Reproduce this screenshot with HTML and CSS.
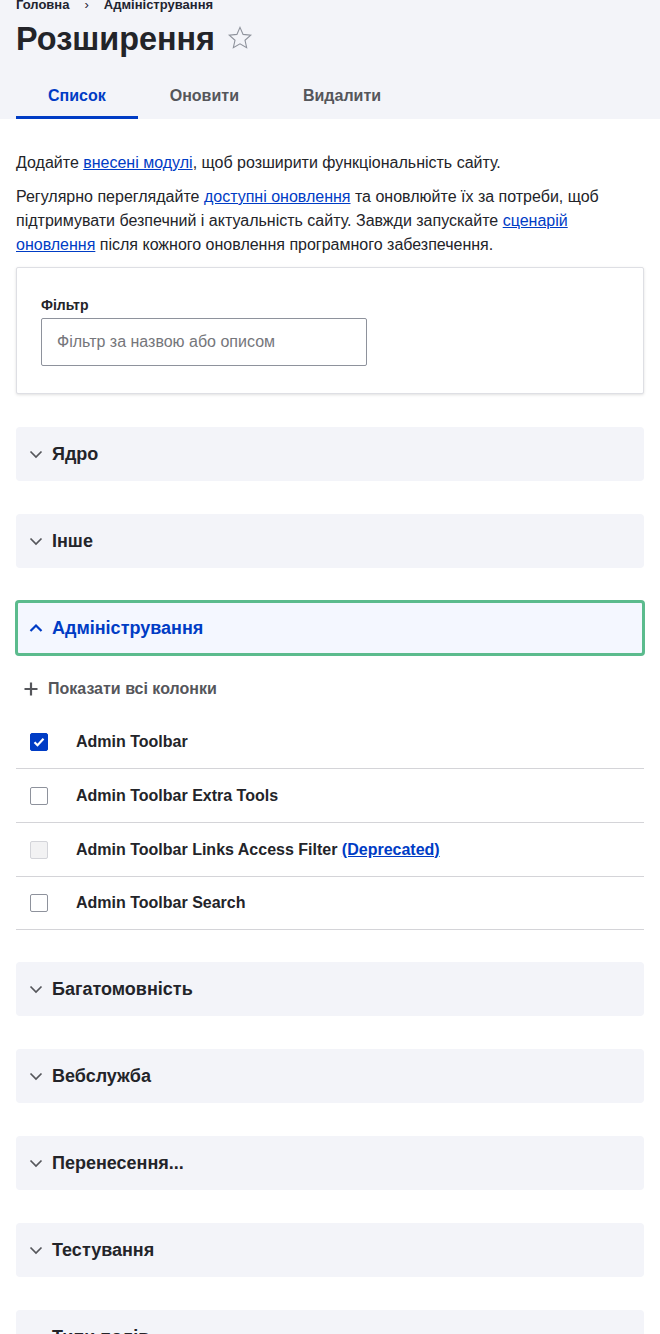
FILE: index.html
```html
<!DOCTYPE html>
<html lang="uk">
<head>
<meta charset="utf-8">
<title>Розширення</title>
<link rel="stylesheet" href="styles.css">
</head>
<body>
<header class="page-header">
  <nav class="breadcrumb">
    <a href="#">Головна</a><span class="sep">›</span><a href="#">Адміністрування</a>
  </nav>
  <div class="title-row">
    <h1 class="title">Розширення</h1>
    <svg class="star" width="26" height="26" viewBox="0 0 24 24"><path d="M12 2.2l2.85 6.45 7.05.7-5.3 4.7 1.55 6.9L12 17.35l-6.15 3.6 1.55-6.9-5.3-4.7 7.05-.7z" fill="none" stroke="#8e929c" stroke-width="1" stroke-linejoin="miter"/></svg>
  </div>
  <nav class="tabs">
    <a href="#" class="tab active">Список</a>
    <a href="#" class="tab">Оновити</a>
    <a href="#" class="tab">Видалити</a>
  </nav>
</header>

<main class="content">
  <p class="intro first">Додайте <a href="#">внесені модулі</a>, щоб розширити функціональність сайту.</p>
  <p class="intro">Регулярно переглядайте <a href="#">доступні оновлення</a> та оновлюйте їх за потреби, щоб підтримувати безпечний і актуальність сайту. Завжди запускайте <a href="#">сценарій оновлення</a> після кожного оновлення програмного забезпечення.</p>

  <div class="card">
    <label class="filter-label" for="f">Фільтр</label>
    <input class="filter-input" id="f" type="text" placeholder="Фільтр за назвою або описом">
  </div>

  <section class="acc">
    <div class="acc-head"><svg class="chev" width="14" height="14" viewBox="0 0 14 14"><path d="M1.5 4.5L7 10l5.5-5.5" fill="none" stroke="#55565b" stroke-width="1.7"/></svg><span>Ядро</span></div>
  </section>
  <section class="acc">
    <div class="acc-head"><svg class="chev" width="14" height="14" viewBox="0 0 14 14"><path d="M1.5 4.5L7 10l5.5-5.5" fill="none" stroke="#55565b" stroke-width="1.7"/></svg><span>Інше</span></div>
  </section>
  <section class="acc open">
    <div class="acc-head"><svg class="chev" width="14" height="14" viewBox="0 0 14 14"><path d="M1.5 10L7 4.5l5.5 5.5" fill="none" stroke="#003cc5" stroke-width="2.2"/></svg><span>Адміністрування</span></div>
    <div class="acc-body">
      <div class="show-cols"><svg width="14" height="14" viewBox="0 0 14 14"><path d="M7 0.5v13M0.5 7h13" stroke="#55565b" stroke-width="2.2"/></svg><span>Показати всі колонки</span></div>
      <div class="mod-table">
        <div class="mod-row"><span class="cb checked"><svg width="12" height="10" viewBox="0 0 12 10"><path d="M1.5 5.2l3 3 6-6.4" fill="none" stroke="#fff" stroke-width="2.2"/></svg></span><span class="mod-name">Admin Toolbar</span></div>
        <div class="mod-row"><span class="cb"></span><span class="mod-name">Admin Toolbar Extra Tools</span></div>
        <div class="mod-row"><span class="cb disabled"></span><span class="mod-name">Admin Toolbar Links Access Filter <a href="#">(Deprecated)</a></span></div>
        <div class="mod-row"><span class="cb"></span><span class="mod-name">Admin Toolbar Search</span></div>
      </div>
    </div>
  </section>
  <section class="acc">
    <div class="acc-head"><svg class="chev" width="14" height="14" viewBox="0 0 14 14"><path d="M1.5 4.5L7 10l5.5-5.5" fill="none" stroke="#55565b" stroke-width="1.7"/></svg><span>Багатомовність</span></div>
  </section>
  <section class="acc">
    <div class="acc-head"><svg class="chev" width="14" height="14" viewBox="0 0 14 14"><path d="M1.5 4.5L7 10l5.5-5.5" fill="none" stroke="#55565b" stroke-width="1.7"/></svg><span>Вебслужба</span></div>
  </section>
  <section class="acc">
    <div class="acc-head"><svg class="chev" width="14" height="14" viewBox="0 0 14 14"><path d="M1.5 4.5L7 10l5.5-5.5" fill="none" stroke="#55565b" stroke-width="1.7"/></svg><span>Перенесення...</span></div>
  </section>
  <section class="acc">
    <div class="acc-head"><svg class="chev" width="14" height="14" viewBox="0 0 14 14"><path d="M1.5 4.5L7 10l5.5-5.5" fill="none" stroke="#55565b" stroke-width="1.7"/></svg><span>Тестування</span></div>
  </section>
  <section class="acc">
    <div class="acc-head"><svg class="chev" width="14" height="14" viewBox="0 0 14 14"><path d="M1.5 4.5L7 10l5.5-5.5" fill="none" stroke="#55565b" stroke-width="1.7"/></svg><span>Типи полів</span></div>
  </section>
</main>
</body>
</html>
```

FILE: styles.css
```css
* { box-sizing: border-box; }

html, body {
  margin: 0;
  padding: 0;
  background: #fff;
  overflow: hidden;
}

body {
  font-family: "Liberation Sans", Arial, sans-serif;
  color: #232429;
  font-size: 16px;
  line-height: 24px;
}

a { color: #003cc5; }

.page-header {
  background: #f3f4f9;
  padding: 0 0 0 16px;
}

.breadcrumb {
  margin-top: -5px;
  height: 20px;
  line-height: 20px;
  font-size: 13px;
  font-weight: 700;
  display: flex;
}
.breadcrumb a { color: #222330; text-decoration: none; }
.breadcrumb .sep { padding: 0 15px 0 15px; color: #222330; font-weight: 400; }

.title-row {
  display: flex;
  align-items: center;
  gap: 12px;
  margin-top: 4px;
  height: 40px;
}
.title {
  margin: 0;
  font-size: 32.4px;
  line-height: 40px;
  font-weight: 700;
  color: #232429;
}
.star { margin-top: -2px; }

.tabs {
  display: flex;
  margin-top: 12px;
}
.tab {
  display: block;
  height: 48px;
  line-height: 49px;
  padding: 0 32px;
  font-size: 16px;
  font-weight: 700;
  color: #55565b;
  text-decoration: none;
}
.tab.active {
  color: #003cc5;
  box-shadow: inset 0 -3px 0 #003cc5;
}

.content {
  padding: 0 16px 40px;
}

.intro { margin: 10px 0 0; }
.intro.first { margin-top: 32px; }

.card {
  margin-top: 10px;
  border: 1px solid #dedfe4;
  border-radius: 2px;
  box-shadow: 0 1px 3px rgba(0, 0, 0, 0.12);
  padding: 28px 24px 27px;
  background: #fff;
}
.filter-label {
  display: block;
  font-size: 14px;
  line-height: 18px;
  font-weight: 700;
  margin-bottom: 4px;
}
.filter-input {
  display: block;
  width: 326px;
  height: 48px;
  border: 1px solid #8e929c;
  border-radius: 2px;
  padding: 0 15px;
  font-family: "Liberation Sans", Arial, sans-serif;
  font-size: 16px;
  color: #232429;
  background: #fff;
}
.filter-input::placeholder { color: #75767b; }

.acc { margin-top: 33px; }
.acc.open + .acc { margin-top: 32px; }
.acc-head {
  display: flex;
  align-items: center;
  height: 54px;
  padding-left: 13px;
  gap: 9px;
  background: #f3f4f9;
  border-radius: 4px;
  font-size: 18px;
  font-weight: 700;
  color: #232429;
}
.acc.open .acc-head {
  height: 56px;
  margin: -1px -1px 0;
  padding-left: 11px;
  border: 3px solid #5bbb8d;
  background: #f4f7ff;
  color: #003cc5;
}

.acc-body { padding-top: 21px; }

.show-cols {
  display: flex;
  align-items: center;
  gap: 10px;
  padding-left: 8px;
  font-weight: 700;
  color: #55565b;
}

.mod-table { margin-top: 14px; }
.mod-row {
  display: flex;
  align-items: center;
  height: 54px;
  border-bottom: 1px solid #d4d4d8;
  padding-left: 14px;
}
.mod-row:last-child { height: 53px; }
.cb {
  width: 18px;
  height: 18px;
  border: 1px solid #8e929c;
  border-radius: 2px;
  background: #fff;
  display: flex;
  align-items: center;
  justify-content: center;
  margin-right: 28px;
  flex: none;
}
.cb.checked { background: #003cc5; border-color: #003cc5; }
.cb.disabled { background: #f2f2f3; border-color: #d3d4d9; }
.mod-name { font-weight: 700; color: #232429; }
.mod-name a { color: #003cc5; }
```
